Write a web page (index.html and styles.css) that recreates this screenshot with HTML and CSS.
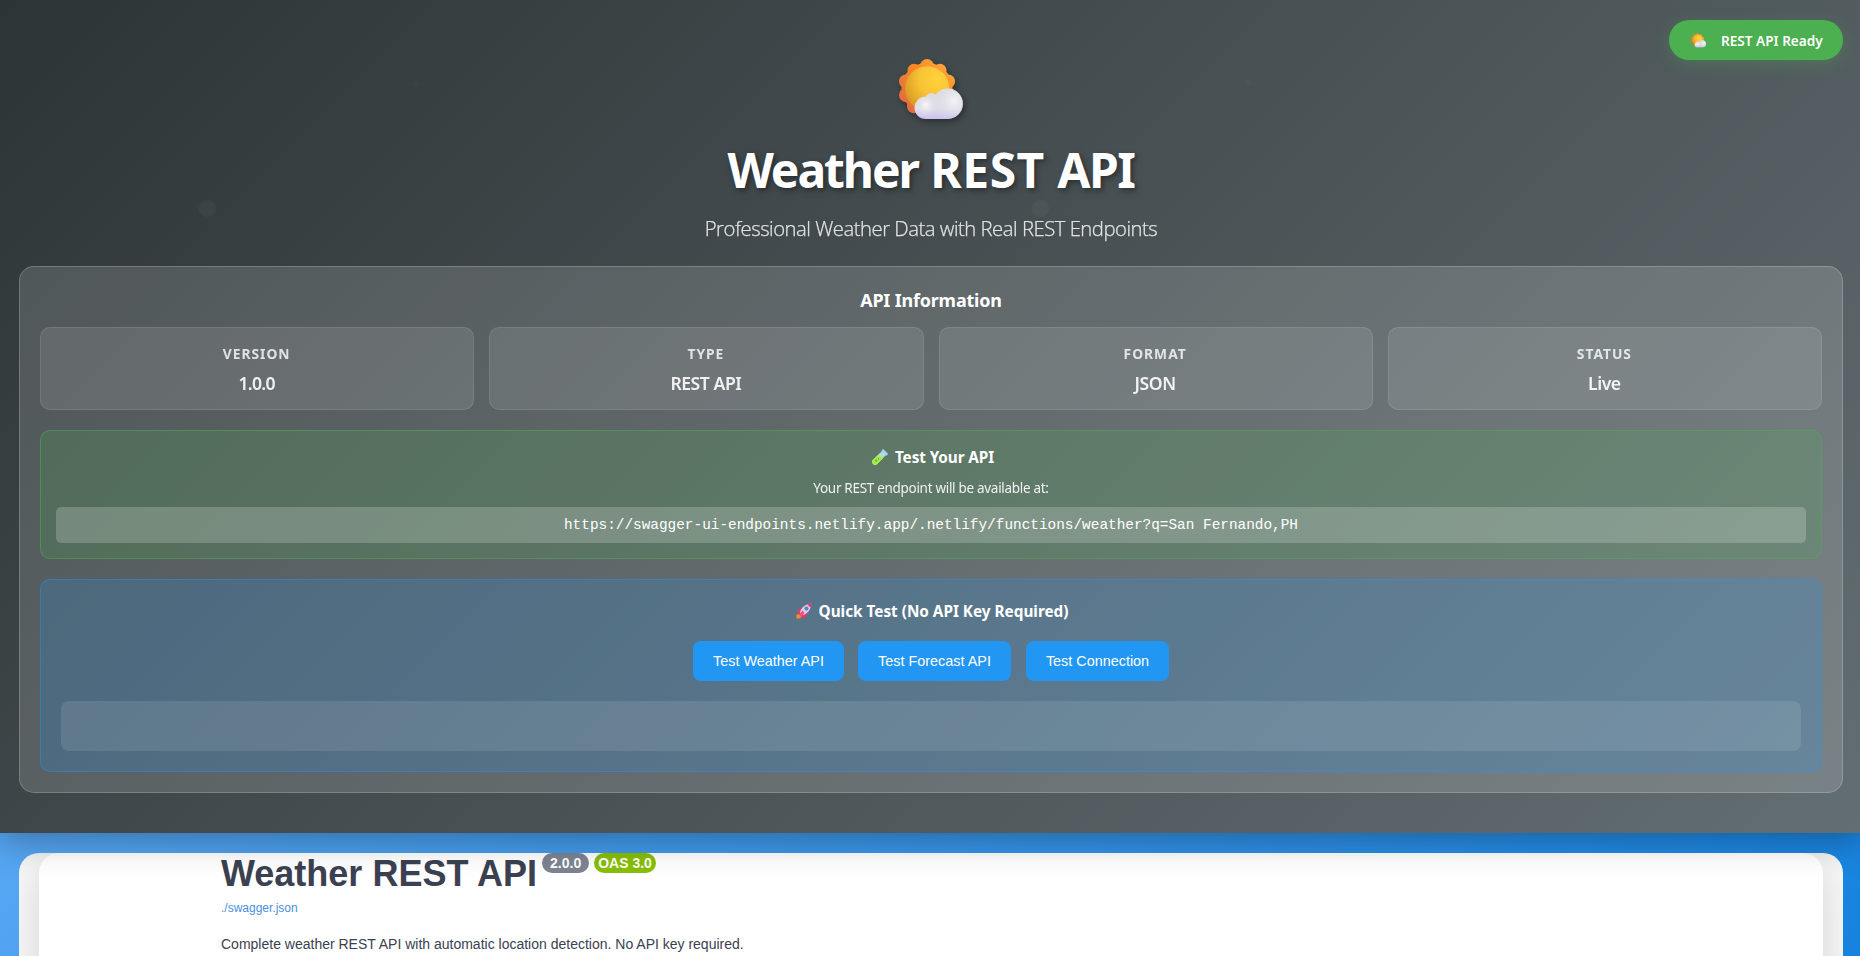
FILE: index.html
```html
<!DOCTYPE html>
<html lang="en">
<head>
<meta charset="utf-8">
<title>Weather REST API</title>
<link rel="stylesheet" href="styles.css">
</head>
<body>
<svg width="0" height="0" class="defs">
  <defs>
    <linearGradient id="ray" gradientUnits="userSpaceOnUse" x1="48" y1="8" x2="8" y2="52"><stop offset="0" stop-color="#ffa63c"/><stop offset=".35" stop-color="#fb8a25"/><stop offset="1" stop-color="#e26a40"/></linearGradient>
    <radialGradient id="sun" cx=".72" cy=".28" r=".8"><stop offset="0" stop-color="#ffd23c"/><stop offset=".5" stop-color="#f8c335"/><stop offset="1" stop-color="#d79a22"/></radialGradient>
    <linearGradient id="cloud" gradientUnits="userSpaceOnUse" x1="0" y1="31" x2="0" y2="61"><stop offset="0" stop-color="#dcdbe0"/><stop offset=".65" stop-color="#e0dde8"/><stop offset="1" stop-color="#cdc1f0"/></linearGradient>
    <radialGradient id="puff" cx=".5" cy=".4" r=".55"><stop offset="0" stop-color="#f7f7f9"/><stop offset="1" stop-color="#e4e2ea" stop-opacity="0"/></radialGradient>
    <radialGradient id="puffR" cx=".72" cy=".4" r=".65"><stop offset="0" stop-color="#f5f5f7"/><stop offset="1" stop-color="#d9d8de" stop-opacity=".1"/></radialGradient>
    <symbol id="weather" viewBox="0 0 64 64">
      <g fill="url(#ray)">
        <circle cx="28" cy="30.300" r="25.500"/>
        <circle cx="28" cy="8.100" r="7"/><circle cx="41" cy="12.300" r="6.500"/><circle cx="49.100" cy="23.400" r="7"/><circle cx="49.100" cy="37.200" r="7"/>
        <circle cx="15" cy="12.300" r="6.500"/><circle cx="6.900" cy="23.400" r="6.900"/><circle cx="6.900" cy="37.200" r="6.900"/><circle cx="15" cy="48.300" r="7"/>
      </g>
      <circle cx="28.200" cy="30.500" r="22.200" fill="url(#sun)"/>
      <g fill="url(#cloud)">
        <circle cx="32.500" cy="41.500" r="6.500"/>
        <circle cx="26.700" cy="49.800" r="11.200"/>
        <circle cx="48.700" cy="45.700" r="15.200"/>
        <path d="M26.700 42h22v19h-22z"/>
      </g>
      <circle cx="27" cy="49" r="10" fill="url(#puff)"/>
      <circle cx="48.600" cy="45.600" r="15" fill="url(#puffR)"/>
    </symbol>
  </defs>
</svg>
<div class="page">
  <header class="hero">
    <i class="dot dot-a"></i><i class="dot dot-b"></i><i class="dot dot-c"></i><i class="dot dot-d"></i>
    <div class="ready"><svg class="ready-icon"><use href="#weather"/></svg><span>REST API Ready</span></div>
    <svg class="hero-icon"><use href="#weather"/></svg>
    <h1 class="title"><span class="word-a">Weather</span> <span class="word-b">REST</span> <span class="word-c">API</span></h1>
    <p class="subtitle">Professional Weather Data with Real REST Endpoints</p>
    <section class="info">
      <h2 class="info-title">API Information</h2>
      <div class="grid">
        <div class="cell"><div class="label">VERSION</div><div class="value tight">1.0.0</div></div>
        <div class="cell"><div class="label">TYPE</div><div class="value">REST API</div></div>
        <div class="cell"><div class="label">FORMAT</div><div class="value">JSON</div></div>
        <div class="cell"><div class="label">STATUS</div><div class="value">Live</div></div>
      </div>
      <div class="endpoint">
        <h3 class="sub-title test-title"><svg class="mini" viewBox="0 0 16 16"><path d="M9.500 2.500l4 4-8.300 8.500a2.800 2.800 0 0 1-4.200-4.200z" fill="#b5dcc8"/><path d="M4.500 7.300l7.300 1.200-6.600 6.500a2.800 2.800 0 0 1-4.200-4.200z" fill="#a2ec4a"/><path d="M10.200.600l1.200-.4 4.400 4.400-.4 1.600-2.800.6-3.400-3.300z" fill="#a5d5f7"/><circle cx="4.200" cy="11.500" r="1" fill="#4fae2c"/><circle cx="6.600" cy="9.800" r=".8" fill="#56b832"/></svg><span>Test Your API</span></h3>
        <p class="endpoint-note">Your REST endpoint will be available at:</p>
        <code class="url">https://swagger-ui-endpoints.netlify.app/.netlify/functions/weather?q=San Fernando,PH</code>
      </div>
      <div class="quick">
        <h3 class="sub-title quick-title"><svg class="mini" viewBox="0 0 16 16"><path d="M.3 12l3-1.200 2 2-1 2.700H.3z" fill="#f5892c"/><path d="M6.500 4.500L2.500 6.500 1 10 5 9.500zM11.500 9.500l-2 4-3.500 2L6.500 11z" fill="#f8306a"/><path d="M3.800 9.500C5 5 9 1 15.300.7 15 7 11 11 6.500 12.300z" fill="#dccbdc"/><path d="M11.300 1.500L15.700.3l-1.200 4.400z" fill="#f8306a"/><path d="M2.800 11.500l3.800-3.800 1.800 1.800L6 14z" fill="#f84a86"/><circle cx="10.500" cy="5.500" r="1.900" fill="#3f86dc"/></svg><span>Quick Test (No API Key Required)</span></h3>
        <div class="buttons">
          <button class="btn b1">Test Weather API</button>
          <button class="btn b2">Test Forecast API</button>
          <button class="btn b3">Test Connection</button>
        </div>
        <div class="result"></div>
      </div>
    </section>
  </header>
  <main class="swagger">
    <div class="panel">
      <div class="wrap">
        <h2 class="doc-title"><span>Weather REST API</span><small class="tag">2.0.0</small><small class="tag oas">OAS 3.0</small></h2>
        <a class="spec">./swagger.json</a>
        <p class="desc">Complete weather REST API with automatic location detection. No API key required.</p>
      </div>
    </div>
  </main>
</div>
</body>
</html>
```
FILE: styles.css
```css
* { box-sizing: border-box; }
html, body { height: 956px; overflow: hidden; }
body {
  margin: 0;
  background: linear-gradient(135deg, #71b5fb 0%, #1683df 100%);
  font-family: "Noto Sans", "Open Sans", sans-serif;
}
h1, h2, h3, p { margin: 0; }
.defs { position: absolute; }
.page { width: 1864px; margin-left: -1px; }

.hero {
  position: relative;
  z-index: 1;
  display: flex;
  flex-direction: column;
  align-items: center;
  height: 833px;
  padding: 56px 20px 40px;
  background: linear-gradient(135deg, #2d3436 0%, #636e72 100%);
  box-shadow: 0 8px 32px rgba(0, 0, 0, .3);
  color: #fff;
}
.dot { position: absolute; border-radius: 50%; background: rgba(255, 255, 255, .04); }
.dot-a { left: 200px; top: 200px; width: 17px; height: 17px; }
.dot-b { left: 1033px; top: 200px; width: 17px; height: 17px; }
.dot-c { left: 413px; top: 80px; width: 8px; height: 8px; background: rgba(255, 255, 255, .02); }
.dot-d { left: 1245px; top: 79px; width: 8px; height: 8px; background: rgba(255, 255, 255, .02); }

.ready {
  position: absolute;
  top: 20px;
  right: 20px;
  display: flex;
  align-items: center;
  width: 174px;
  height: 40px;
  padding: 1px 0 0 22px;
  gap: 15px;
  border-radius: 25px;
  background: #4caf50;
  box-shadow: 0 4px 15px rgba(76, 175, 80, .3);
  font-size: 13.600px;
  font-weight: 600;
  white-space: nowrap;
}
.ready-icon { width: 15px; height: 15px; }

.hero-icon {
  flex: none;
  width: 64px;
  height: 64px;
  margin-top: 2px;
  filter: drop-shadow(2px 3px 3px rgba(0, 0, 0, .35));
  overflow: visible;
}
.title {
  height: 66px;
  margin-top: 15px;
  font-size: 48px;
  line-height: 66px;
  font-weight: 700;
  white-space: nowrap;
  text-shadow: 2px 2px 4px rgba(0, 0, 0, .3), 2px 4px 8px rgba(0, 0, 0, .15);
}
.word-a { letter-spacing: -2.100px; }
.word-b { letter-spacing: .500px; }
.word-c { letter-spacing: -1.500px; }
.subtitle {
  height: 30px;
  margin-top: 10px;
  font-family: "Open Sans", sans-serif;
  font-size: 20.300px;
  line-height: 30px;
  font-weight: 300;
  letter-spacing: -.490px;
  white-space: nowrap;
  -webkit-text-stroke: .250px #fff;
  opacity: .84;
}

.info {
  width: 100%;
  height: 527px;
  margin-top: 23px;
  padding: 20px;
  border: 1px solid rgba(255, 255, 255, .2);
  border-radius: 15px;
  background: rgba(255, 255, 255, .15);
}
.info-title {
  height: 40px;
  font-size: 17.900px;
  line-height: 27px;
  font-weight: 700;
  letter-spacing: -.150px;
  text-align: center;
}
.grid { display: grid; grid-template-columns: repeat(4, 1fr); gap: 15px; }
.cell {
  height: 83px;
  padding: 14px 15px 14px 14px;
  border: 1px solid rgba(255, 255, 255, .1);
  border-radius: 10px;
  background: rgba(255, 255, 255, .1);
  text-align: center;
}
.label {
  font-size: 13.800px;
  line-height: 23px;
  font-weight: 700;
  letter-spacing: 1px;
  opacity: .8;
}
.value { margin-top: 6px; font-size: 17.600px; line-height: 25px; font-weight: 600; letter-spacing: -.450px; opacity: .9; }
.tight { letter-spacing: -.700px; }

.endpoint {
  height: 129px;
  margin-top: 20px;
  padding: 15px;
  border: 1px solid rgba(76, 175, 80, .5);
  border-radius: 10px;
  background: rgba(76, 175, 80, .2);
  text-align: center;
}
.sub-title {
  display: flex;
  justify-content: center;
  align-items: center;
  gap: 7px;
  height: 22px;
  padding-left: 2px;
  font-size: 15.300px;
  line-height: 22px;
  font-weight: 700;
}
.test-title { padding-left: 4px; letter-spacing: -.100px; }
.mini { width: 16px; height: 16px; }
.endpoint-note {
  height: 20px;
  margin-top: 10px;
  font-size: 13.500px;
  line-height: 20px;
  letter-spacing: -.300px;
  opacity: .9;
}
.url {
  display: block;
  height: 36px;
  margin-top: 9px;
  border-radius: 5px;
  background: rgba(255, 255, 255, .2);
  font-family: "Liberation Mono", monospace;
  font-size: 14.400px;
  line-height: 36px;
}

.quick {
  height: 193px;
  margin-top: 20px;
  padding: 20px;
  border: 1px solid rgba(33, 150, 243, .4);
  border-radius: 10px;
  background: rgba(33, 150, 243, .2);
}
.buttons { display: flex; justify-content: center; gap: 14px; margin-top: 19px; }
.btn {
  height: 40px;
  padding: 0;
  border: 0;
  border-radius: 8px;
  background: #2196f3;
  color: #fff;
  font: 14.400px "Liberation Sans", sans-serif;
}
.b1 { width: 151px; }
.b2 { width: 153px; }
.b3 { width: 143px; margin-left: 1px; }
.result { height: 50px; margin-top: 20px; border-radius: 8px; background: rgba(255, 255, 255, .1); }

.swagger {
  height: 103px;
  margin: 20px 20px 0;
  padding: 0 20px;
  overflow: hidden;
  border-radius: 20px 20px 0 0;
  background: #f8f8f8;
}
.panel {
  height: 400px;
  border-radius: 20px;
  background: #fff;
  box-shadow: 0 10px 40px rgba(0, 0, 0, .15);
}
.wrap {
  padding-left: 182px;
  color: #3b4151;
  font-family: "Liberation Sans", sans-serif;
}
.doc-title {
  display: flex;
  align-items: flex-start;
  height: 42px;
  font-size: 36px;
  line-height: 41px;
}
.tag {
  height: 20px;
  margin: 0 0 0 5px;
  padding: 0 8px;
  border-radius: 57px;
  background: #7d8492;
  color: #fff;
  font-size: 14px;
  line-height: 20px;
}
.oas { padding: 0 4px; background: #89bf04; }
.spec { display: block; height: 20px; margin-top: 3px; color: #4990e2; font-size: 12px; line-height: 20px; }
.desc { margin-top: 15px; font-size: 14px; line-height: 22px; }
```
